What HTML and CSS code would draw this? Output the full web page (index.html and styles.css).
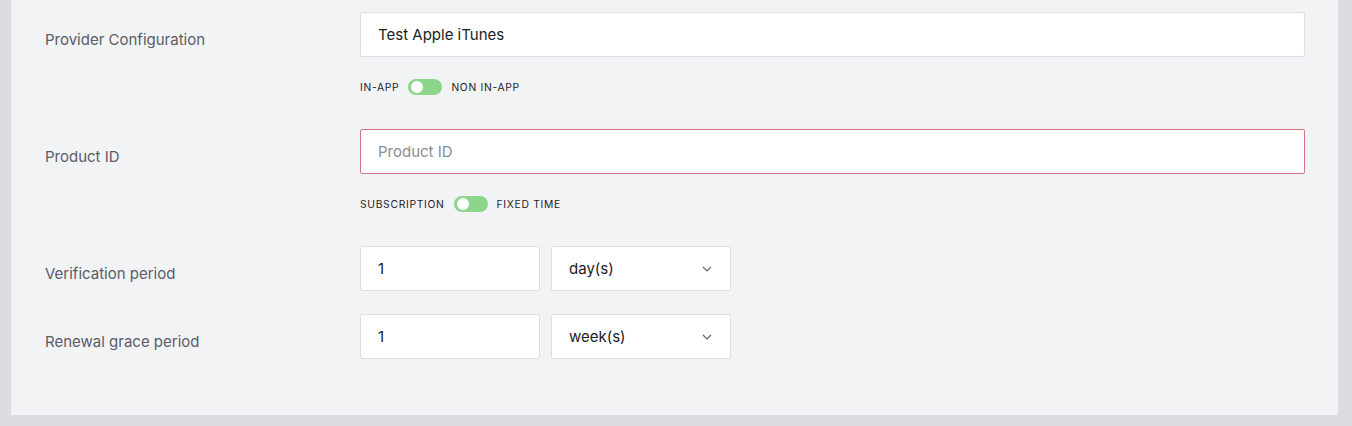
FILE: index.html
```html
<html>
<head>
    <link rel="stylesheet" href="styles.css">
    <title>Product settings</title>
</head>
<body>
    <div class="panel">
        <div class="row">
            <label class="label">Provider Configuration</label>
            <div class="field">
                <input class="input" type="text" value="Test Apple iTunes">
                <div class="switch-row">
                    <span>IN-APP</span>
                    <span class="switch"><span class="knob"></span></span>
                    <span>NON IN-APP</span>
                </div>
            </div>
        </div>
        <div class="row">
            <label class="label">Product ID</label>
            <div class="field">
                <input class="input invalid" type="text" placeholder="Product ID">
                <div class="switch-row">
                    <span>SUBSCRIPTION</span>
                    <span class="switch"><span class="knob"></span></span>
                    <span>FIXED TIME</span>
                </div>
            </div>
        </div>
        <div class="row short">
            <label class="label">Verification period</label>
            <div class="field pair">
                <input class="input small" type="text" value="1">
                <div class="select">
                    day(s)
                    <svg width="10" height="6" viewBox="0 0 10 6"><path d="M1 1l4 4 4-4" fill="none" stroke="#666" stroke-width="1.2"/></svg>
                </div>
            </div>
        </div>
        <div class="row short">
            <label class="label">Renewal grace period</label>
            <div class="field pair">
                <input class="input small" type="text" value="1">
                <div class="select">
                    week(s)
                    <svg width="10" height="6" viewBox="0 0 10 6"><path d="M1 1l4 4 4-4" fill="none" stroke="#666" stroke-width="1.2"/></svg>
                </div>
            </div>
        </div>
    </div>
</body>
</html>
```

FILE: styles.css
```css
body
{
    margin: 0;
    background: #dcdde1;
    font-family: Inter, "Liberation Sans", sans-serif;
}
.panel
{
    margin: 0 14px 0 11px;
    background: #f2f3f5;
    padding: 12px 33px 56px 34px;
    height: 347px;
}
.row
{
    display: grid;
    grid-template-columns: 315px 1fr;
}
.row.short
{
    margin-bottom: 23px;
}
.label
{
    font-size: 15px;
    color: #5b5b66;
    padding-top: 18px;
}
.field
{
    display: flex;
    flex-direction: column;
}
.field.pair
{
    flex-direction: row;
    gap: 11px;
}
.input
{
    box-sizing: border-box;
    height: 45px;
    border: 1px solid #dedfe2;
    border-radius: 2px;
    background: #fff;
    padding: 0 17px;
    font-family: Inter, "Liberation Sans", sans-serif;
    font-size: 15px;
    color: #1c1c24;
    outline: none;
}
.input::placeholder
{
    color: #8a8e96;
}
.input.invalid
{
    border-color: #d8737b;
}
.input.small
{
    width: 180px;
}
.select
{
    box-sizing: border-box;
    width: 180px;
    height: 45px;
    border: 1px solid #dedfe2;
    border-radius: 2px;
    background: #fff;
    padding: 0 18px 0 17px;
    display: flex;
    align-items: center;
    justify-content: space-between;
    font-size: 15px;
    color: #1c1c24;
}
.switch-row
{
    display: flex;
    align-items: center;
    gap: 9px;
    height: 16px;
    margin: 22px 0 34px;
    font-size: 10.3px;
    letter-spacing: 0.7px;
    color: #1c1c24;
}
.switch
{
    width: 34px;
    height: 16px;
    border-radius: 8px;
    background: #8bd68b;
    position: relative;
}
.knob
{
    position: absolute;
    left: 3px;
    top: 2px;
    width: 12px;
    height: 12px;
    border-radius: 50%;
    background: #fff;
}
```
